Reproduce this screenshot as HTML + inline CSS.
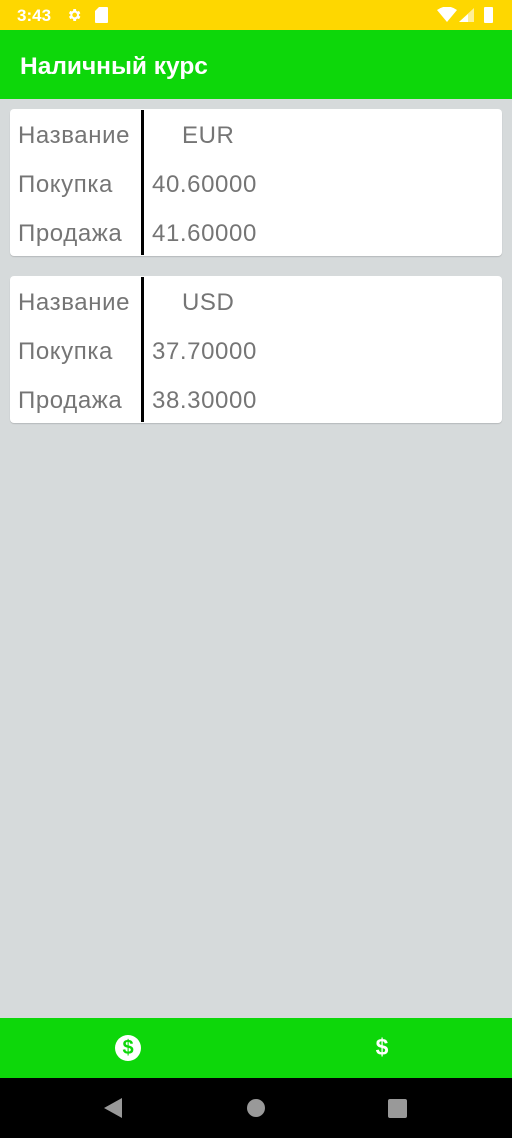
<!DOCTYPE html>
<html><head><meta charset="utf-8"><style>
*{margin:0;padding:0;box-sizing:border-box}
body{width:512px;height:1138px;background:#d6dadb;font-family:"Liberation Sans",sans-serif;position:relative;overflow:hidden}
.sb{position:absolute;top:0;left:0;width:512px;height:30px;background:#fed700;color:#fff}
.ab{position:absolute;top:30px;left:0;width:512px;height:69px;background:#0dd70a;color:#fff;font-weight:bold;font-size:24.5px;padding:23px 0 0 20px}
.card{position:absolute;left:10px;width:492px;height:147px;background:#fff;border-radius:4px;box-shadow:0 1px 1px rgba(0,0,0,.15)}
.div{position:absolute;left:131px;top:1px;width:3px;height:145px;background:#000}
.t{position:absolute;font-size:24px;letter-spacing:0.6px;color:#757575;white-space:nowrap}
.bn{position:absolute;top:1018px;left:0;width:512px;height:60px;background:#0dd70a}
.nav{position:absolute;top:1078px;left:0;width:512px;height:60px;background:#000}
</style></head><body>
<div class="sb">
<span style="position:absolute;left:17px;top:6px;font-size:17px;font-weight:bold">3:43</span>
<svg style="position:absolute;left:66px;top:7px" width="16" height="16" viewBox="0 0 24 24"><path fill="#fff" d="M19.4 13a7.5 7.5 0 000-2l2.1-1.6-2-3.5-2.5 1a7 7 0 00-1.7-1L15 3h-4l-.4 2.8a7 7 0 00-1.7 1l-2.5-1-2 3.5L6.6 11a7.5 7.5 0 000 2l-2.1 1.6 2 3.5 2.5-1a7 7 0 001.7 1L11 21h4l.4-2.8a7 7 0 001.7-1l2.5 1 2-3.5zM13 15.5a3.5 3.5 0 110-7 3.5 3.5 0 010 7z"/></svg>
<svg style="position:absolute;left:95px;top:7px" width="13" height="16" viewBox="0 0 13 16"><path fill="#fff" d="M4 0h8a1 1 0 011 1v14a1 1 0 01-1 1H1a1 1 0 01-1-1V4z"/></svg>
<svg style="position:absolute;left:437px;top:7px" width="20" height="15" viewBox="0 0 20 15"><path fill="#fff" d="M0 3Q10-4 20 3L10 15z"/></svg>
<svg style="position:absolute;left:459px;top:8px" width="15" height="14" viewBox="0 0 15 14"><path fill="#fff" d="M0 14L15 0v14z" opacity=".6"/><path fill="#fff" d="M0 14L9 6v8z"/></svg>
<div style="position:absolute;left:484px;top:7px;width:9px;height:16px;background:#fff;border-radius:1px"></div>
</div>
<div class="ab">Наличный курс</div>

<div class="card" style="top:109px">
<div class="div"></div>
<div class="t" style="left:8px;top:13px">Название</div><div class="t" style="left:172px;top:13px">EUR</div>
<div class="t" style="left:8px;top:62px">Покупка</div><div class="t" style="left:142px;top:62px">40.60000</div>
<div class="t" style="left:8px;top:111px">Продажа</div><div class="t" style="left:142px;top:111px">41.60000</div>
</div>
<div class="card" style="top:276px">
<div class="div"></div>
<div class="t" style="left:8px;top:13px">Название</div><div class="t" style="left:172px;top:13px">USD</div>
<div class="t" style="left:8px;top:62px">Покупка</div><div class="t" style="left:142px;top:62px">37.70000</div>
<div class="t" style="left:8px;top:111px">Продажа</div><div class="t" style="left:142px;top:111px">38.30000</div>
</div>

<div class="bn">
<div style="position:absolute;left:115px;top:17px;width:26px;height:26px;border-radius:50%;background:#fff;color:#0dd70a;font-weight:bold;font-size:20px;text-align:center;line-height:26px">$</div>
<div style="position:absolute;left:372px;top:16px;width:20px;color:#fff;font-weight:bold;font-size:23px;text-align:center">$</div>
</div>
<div class="nav">
<svg style="position:absolute;left:104px;top:20px" width="19" height="20" viewBox="0 0 19 20"><path fill="#999" d="M18 0v20L0 10z"/></svg>
<div style="position:absolute;left:247px;top:21px;width:18px;height:18px;border-radius:50%;background:#999"></div>
<div style="position:absolute;left:388px;top:21px;width:19px;height:19px;border-radius:2px;background:#999"></div>
</div>
</body></html>
